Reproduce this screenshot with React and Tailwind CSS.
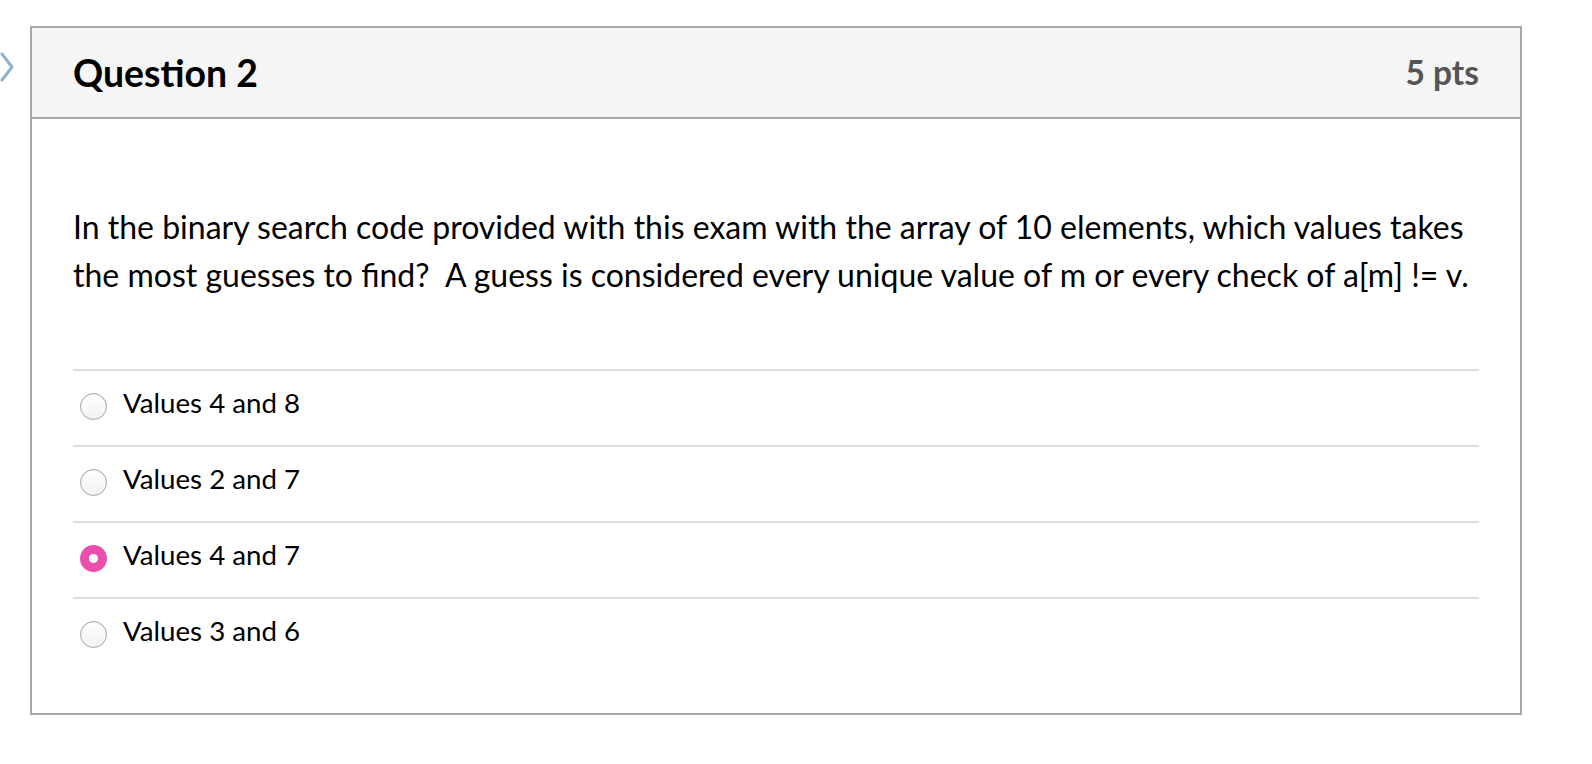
import React from "react";

const options = [
  { label: "Values 4 and 8", checked: false },
  { label: "Values 2 and 7", checked: false },
  { label: "Values 4 and 7", checked: true },
  { label: "Values 3 and 6", checked: false },
];

function Radio({ checked }) {
  if (checked) {
    return (
      <span className="mt-[6px] flex h-[27px] w-[27px] shrink-0 items-center justify-center rounded-full bg-[#ea4fae]">
        <span className="h-[9px] w-[9px] rounded-full bg-white" />
      </span>
    );
  }
  return (
    <span className="mt-[6px] h-[27px] w-[27px] shrink-0 rounded-full border border-[#a3a3a3] bg-gradient-to-b from-white to-[#f2f2f2] shadow-[inset_0_1px_1px_rgba(0,0,0,0.08)]" />
  );
}

export default function App() {
  return (
    <div className="relative min-h-[764px] bg-white font-['Lato','Noto_Sans',sans-serif] text-black">
      <svg
        className="absolute left-0 top-[52px]"
        width="16"
        height="34"
        viewBox="0 0 16 34"
        fill="none"
      >
        <polyline
          points="2,2 12,15 2,28"
          stroke="#8fb2cd"
          strokeWidth="3"
          strokeLinecap="round"
          strokeLinejoin="round"
          style={{ filter: "blur(0.6px)" }}
        />
      </svg>
      <div className="pl-[30px] pt-[26px]">
        <div className="w-[1492px] border-2 border-[#a8a8a8]">
          <div className="flex h-[91px] items-center justify-between border-b-2 border-[#a8a8a8] bg-[#f5f5f5] px-[41px]">
            <h2 className="text-[37.4px] font-bold leading-none">Question 2</h2>
            <div className="text-[33.5px] font-bold leading-none text-[#555555]">5 pts</div>
          </div>
          <div className="px-[41px] pb-[40px] pt-[84px]">
            <p className="text-[32px] leading-[48px]">
              In the binary search code provided with this exam with the array of 10 elements, which values takes
              the most guesses to find?{"\u00a0"} A guess is considered every unique value of m or every check of
              a[m] != v.
            </p>
            <div className="mt-[70px]">
              {options.map((o) => (
                <div
                  key={o.label}
                  className="flex h-[76px] items-center gap-[16px] border-t-2 border-[#dddddd] pb-[10px] pl-[7px]"
                >
                  <Radio checked={o.checked} />
                  <span className="text-[27.7px] leading-none">{o.label}</span>
                </div>
              ))}
            </div>
          </div>
        </div>
      </div>
    </div>
  );
}
